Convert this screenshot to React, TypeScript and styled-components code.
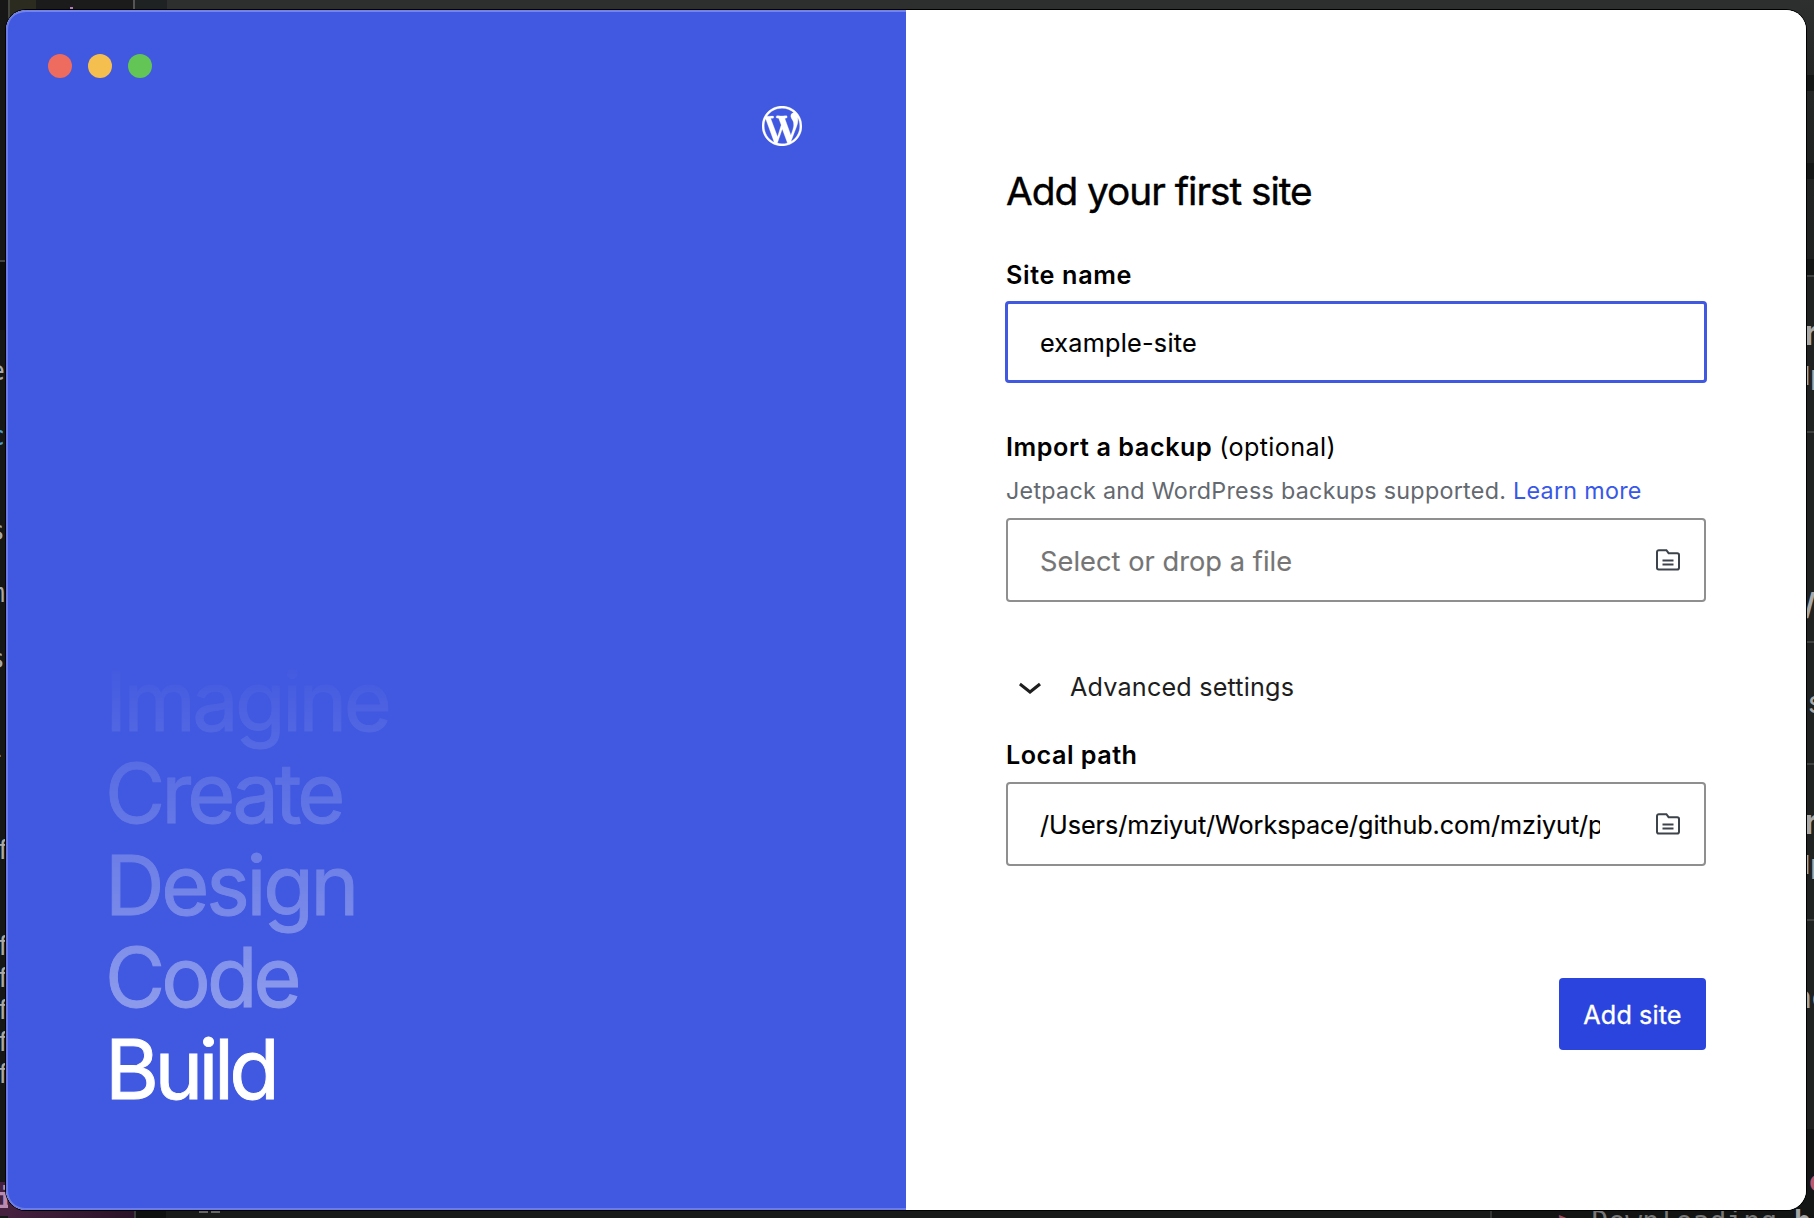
import React from "react";
import styled, { createGlobalStyle } from "styled-components";

const Global = createGlobalStyle`
  * { box-sizing: border-box; }
  html, body { margin: 0; padding: 0; background: #161717; }
  body { font-family: Inter, "Liberation Sans", sans-serif; overflow: hidden; }
`;

const blue = "#4158e0";

const Desktop = styled.div`
  position: relative;
  width: 1814px;
  height: 1218px;
  padding: 10px 8px 8px 6px;
  overflow: hidden;
`;

/* Terminal and editor windows that peek out around the app */
const BackdropGrid = styled.div`
  position: absolute;
  inset: 0;
  display: grid;
  grid-template-columns: 8px 1fr 14px;
  background: #161717;
`;

const Column = styled.div`
  display: flex;
  flex-direction: column;
  min-width: 0;
`;

const Middle = styled(Column)`
  justify-content: space-between;
`;

const Strip = styled.div<{ $h: number }>`
  display: flex;
  height: ${(p) => p.$h}px;
`;

const Piece = styled.div<{ $w?: number; $bg: string }>`
  display: flex;
  flex: ${(p) => (p.$w ? `0 0 ${p.$w}px` : "1 1 0")};
  min-width: 0;
  background: ${(p) => p.$bg};
`;

const Cell = styled.div<{ $h: number; $bg?: string; $end?: boolean }>`
  display: flex;
  flex: 0 0 ${(p) => p.$h}px;
  align-items: center;
  justify-content: ${(p) => (p.$end ? "flex-end" : "flex-start")};
  background: ${(p) => p.$bg ?? "transparent"};
`;

const Glyph = styled.span<{ $size?: number; $color?: string; $mono?: boolean; $bold?: boolean; $shift?: number }>`
  flex: none;
  margin-left: ${(p) => p.$shift ?? 0}px;
  margin-right: ${(p) => -(p.$shift ?? 0)}px;
  font-family: ${(p) => (p.$mono ? '"DejaVu Sans Mono", monospace' : 'Inter, "Liberation Sans", sans-serif')};
  font-size: ${(p) => p.$size ?? 26}px;
  font-weight: ${(p) => (p.$bold ? 700 : 400)};
  line-height: 32px;
  white-space: pre;
  color: ${(p) => p.$color ?? "#a9a9a9"};
`;

const LogLine = styled.div`
  z-index: 1;
  display: flex;
  flex: none;
  gap: 17px;
  height: 32px;
  margin: 22px 0 0 32px;
`;

const WindowShadow = styled.div`
  position: relative;
  z-index: 2;
  border-radius: 20px;
  box-shadow: 0 0 0 1px #000;
`;

const Window = styled.main`
  display: grid;
  grid-template-columns: 1fr 1fr;
  height: 1200px;
  border-radius: 20px;
  overflow: hidden;
  background: #fff;
`;

const Hero = styled.section`
  display: flex;
  flex-direction: column;
  justify-content: space-between;
  padding: 44px 99px 95px;
  background: ${blue};
  border-radius: 20px 0 0 20px;
  box-shadow: inset 2px 0 0 #6b7ce8, inset 0 2px 0 #7484ea, inset 0 -2px 0 #6b7ce8;
`;

const HeroTop = styled.div`
  display: flex;
  flex-direction: column;
`;

const Lights = styled.div`
  display: flex;
  gap: 16px;
  margin-left: -57px;
`;

const Light = styled.i<{ $color: string }>`
  width: 24px;
  height: 24px;
  border-radius: 50%;
  background: ${(p) => p.$color};
`;

const Logo = styled.svg`
  align-self: flex-end;
  width: 40px;
  height: 40px;
  margin: 28px 5px 0 0;
  fill: #fff;
  stroke: #fff;
  stroke-width: 0.15;
`;

const Words = styled.div`
  display: flex;
  flex-direction: column;
  color: #fff;
`;

const Fading = styled.div`
  display: flex;
  flex-direction: column;
  -webkit-mask-image: linear-gradient(to bottom, transparent 0, rgba(0, 0, 0, 0.42) 100%);
  mask-image: linear-gradient(to bottom, transparent 0, rgba(0, 0, 0, 0.42) 100%);
`;

const Word = styled.span<{ $spacing: number }>`
  font-size: 82.5px;
  line-height: 92px;
  letter-spacing: ${(p) => p.$spacing}px;
  -webkit-text-stroke: 0.9px currentColor;
`;

const Panel = styled.form`
  display: flex;
  flex-direction: column;
  padding: 157px 100px 0;
  color: #000;
  background: #fff;
`;

const Title = styled.h1`
  margin: 0 0 44px;
  font-size: 38.8px;
  font-weight: 400;
  line-height: 48px;
  letter-spacing: -1.03px;
  white-space: nowrap;
  -webkit-text-stroke: 0.4px currentColor;
`;

const Label = styled.div<{ $above?: number; $gap: number; $spacing: number }>`
  display: flex;
  gap: 7px;
  margin: ${(p) => p.$above ?? 0}px 0 ${(p) => p.$gap}px;
  font-size: 25.2px;
  line-height: 32px;
  font-weight: 600;
  letter-spacing: ${(p) => p.$spacing}px;
  white-space: nowrap;
`;

const Optional = styled.span`
  font-weight: 400;
  letter-spacing: 0.34px;
`;

const Hint = styled.p`
  margin: 0 0 11px;
  font-size: 23.3px;
  line-height: 32px;
  letter-spacing: 0.28px;
  color: #646970;
  white-space: nowrap;
`;

const HintLink = styled.a`
  color: #3858e9;
`;

const Field = styled.div<{ $focused?: boolean }>`
  display: flex;
  align-items: center;
  justify-content: space-between;
  height: ${(p) => (p.$focused ? 82 : 84)}px;
  margin: 0 ${(p) => (p.$focused ? -1 : 0)}px;
  padding: 0 ${(p) => (p.$focused ? 32 : 24)}px 0 32px;
  border: ${(p) => (p.$focused ? `3px solid ${blue}` : "2px solid #8f8f8f")};
  border-radius: 4px;
`;

const Value = styled.span<{ $placeholder?: boolean; $spacing?: number; $drop?: number }>`
  width: 560px;
  overflow: hidden;
  padding-top: ${(p) => p.$drop ?? 0}px;
  font-size: ${(p) => (p.$placeholder ? 27.2 : 25.2)}px;
  line-height: 36px;
  letter-spacing: ${(p) => p.$spacing ?? 0}px;
  color: ${(p) => (p.$placeholder ? "#757575" : "#000")};
  white-space: nowrap;
  -webkit-text-stroke: 0.15px currentColor;
`;

const FolderSvg = styled.svg`
  width: 24px;
  height: 22px;
  fill: none;
  stroke: #3c434a;
  stroke-width: 2;
`;

const Advanced = styled.div`
  display: flex;
  align-items: center;
  gap: 16px;
  height: 48px;
  margin: 60px 0 29px;
  font-size: 25.2px;
  letter-spacing: 0.18px;
  line-height: 32px;
  color: #1e1e1e;
`;

const AdvancedText = styled.span`
  padding-top: 2px;
`;

const Chevron = styled.svg`
  width: 48px;
  height: 48px;
  fill: #1e1e1e;
`;

const Submit = styled.button`
  align-self: flex-end;
  width: 147px;
  height: 72px;
  margin-top: 112px;
  padding: 2px 0 0;
  border: 0;
  border-radius: 4px;
  background: #2b44de;
  color: #fff;
  font-family: inherit;
  font-size: 25.2px;
  letter-spacing: 0.11px;
  -webkit-text-stroke: 0.3px currentColor;
`;

const Folder = () => (
  <FolderSvg viewBox="0 0 24 22">
    <path d="M1 18.7V3A1.8 1.8 0 0 1 2.8 1.2h7.6l2.2 3H21.2A1.8 1.8 0 0 1 23 6v12.7a1.8 1.8 0 0 1-1.8 1.8H2.8A1.8 1.8 0 0 1 1 18.7z" />
    <path d="M6.5 11.5h11M6.5 15.5h11" />
  </FolderSvg>
);

type Sliver = {
  h: number;
  bg?: string;
  text?: string;
  size?: number;
  color?: string;
  mono?: boolean;
  bold?: boolean;
  shift?: number;
};

const term = { h: 32, mono: true, shift: -3 };
const stem = { h: 32, mono: true, shift: 3, text: "f" };

const leftSlivers: Sliver[] = [
  { h: 260, bg: "#171717" },
  { h: 2, bg: "#444" },
  { h: 68, bg: "#0e0e0e" },
  { h: 25 },
  { ...term, text: "e" },
  { h: 33 },
  { ...term, text: "c", color: "#4f9dc6" },
  { h: 63 },
  { ...term, text: "s" },
  { h: 30 },
  { ...term, text: "m" },
  { h: 34 },
  { ...term, text: "s" },
  { h: 63 },
  { ...term, text: "-" },
  { h: 64 },
  { ...stem },
  { h: 64 },
  { ...stem },
  { ...stem },
  { ...stem },
  { ...stem },
  { ...stem },
  { h: 92 },
  { h: 34, bg: "#45203f", text: "it", mono: true, bold: true, size: 28, shift: 22, color: "#b98bb0" },
];

const body = "#202222";
const rule = "#3f4141";

const rightSlivers: Sliver[] = [
  { h: 75, bg: "linear-gradient(#2e3030, #232525)" },
  { h: 16, bg: "#151717" },
  { h: 72, bg: "linear-gradient(#252727, #1f2121)" },
  { h: 16, bg: "#151717" },
  { h: 80, bg: "linear-gradient(#222424, #1f2121)" },
  { h: 16, bg: "#131515" },
  { h: 2, bg: rule },
  { h: 40, bg: body },
  { h: 32, bg: body, text: "r", size: 34, bold: true, shift: 4 },
  { h: 11, bg: body },
  { h: 32, bg: body, text: "lp", size: 26, shift: 4 },
  { h: 39, bg: body },
  { h: 2, bg: rule },
  { h: 155, bg: body },
  { h: 32, bg: body, text: "/", size: 30, bold: true, shift: 4 },
  { h: 21, bg: body },
  { h: 2, bg: rule },
  { h: 43, bg: body },
  { h: 32, bg: body, text: "s", size: 30, shift: 8 },
  { h: 45, bg: body },
  { h: 2, bg: rule },
  { h: 41, bg: body },
  { h: 32, bg: body, text: "r", size: 34, bold: true, shift: 4 },
  { h: 11, bg: body },
  { h: 32, bg: body, text: "lp", size: 26, shift: 4 },
  { h: 38, bg: body },
  { h: 2, bg: rule },
  { h: 60, bg: body },
  { h: 32, bg: body, text: "ne", size: 30, shift: -6 },
  { h: 116, bg: body },
  { h: 37, bg: "#141616" },
  { h: 32, bg: "#141616", text: "c", size: 28, mono: true, bold: true, shift: 8, color: "#c0566c" },
  { h: 20, bg: "#141616" },
];

const Slivers = ({ items, end }: { items: Sliver[]; end?: boolean }) => (
  <Column>
    {items.map((s, i) => (
      <Cell key={i} $h={s.h} $bg={s.bg} $end={end}>
        {s.text && (
          <Glyph $size={s.size} $color={s.color} $mono={s.mono} $bold={s.bold} $shift={s.shift}>
            {s.text}
          </Glyph>
        )}
      </Cell>
    ))}
  </Column>
);

const topPieces: [number | undefined, string][] = [
  [2, "#45463f"],
  [26, "#2c2b20"],
  [34, "#1b1b1b"],
  [3, "linear-gradient(#1b1b1b 7px, #b57bb8 7px, #b57bb8 9px, #1b1b1b 9px)"],
  [60, "#1b1b1b"],
  [2, "#555"],
  [32, "#1e2222"],
  [undefined, "#2d2f2f"],
];

const bottomPieces: [number, string][] = [
  [126, "linear-gradient(90deg, #45203f, #2a1228)"],
  [2, "#3a3c3c"],
  [30, "#0e1010"],
  [33, "#181a1a"],
  [9, "linear-gradient(#181a1a 27px, #666 27px, #666 29px, #181a1a 29px)"],
  [3, "#181a1a"],
  [9, "linear-gradient(#181a1a 27px, #666 27px, #666 29px, #181a1a 29px)"],
  [1270, "#181a1a"],
  [2, "#333535"],
];

const Backdrop = () => (
  <BackdropGrid>
    <Slivers items={leftSlivers} end />
    <Middle>
      <Strip $h={34}>
        {topPieces.map(([w, bg], i) => (
          <Piece key={i} $w={w} $bg={bg} />
        ))}
      </Strip>
      <Strip $h={34}>
        {bottomPieces.map(([w, bg], i) => (
          <Piece key={i} $w={w} $bg={bg} />
        ))}
        <Piece $bg="#121414">
          <LogLine>
            <Glyph $mono $size={28} $color="#9c4a5c">{"==>"}</Glyph>
            <Glyph $mono $size={28} $color="#777">Downloading</Glyph>
            <Glyph $mono $size={28} $color="#a5a5a5" $bold>br</Glyph>
          </LogLine>
        </Piece>
      </Strip>
    </Middle>
    <Slivers items={rightSlivers} />
  </BackdropGrid>
);

export default function App() {
  return (
    <Desktop>
      <Global />
      <Backdrop />
      <WindowShadow>
        <Window>
          <Hero>
            <HeroTop>
              <Lights>
                <Light $color="#ed6b5f" />
                <Light $color="#f5bf4f" />
                <Light $color="#62c555" />
              </Lights>
              <Logo viewBox="0 0 20 20">
                <path d="M20 10c0-5.51-4.49-10-10-10C4.48 0 0 4.49 0 10c0 5.52 4.48 10 10 10 5.51 0 10-4.48 10-10zM7.78 15.37L4.37 6.22c.55-.02 1.17-.08 1.17-.08.5-.06.44-1.13-.06-1.11 0 0-1.45.11-2.37.11-.18 0-.37 0-.58-.01C4.12 2.69 6.87 1.11 10 1.11c2.33 0 4.45.87 6.05 2.34-.68-.11-1.65.39-1.65 1.58 0 .74.45 1.36.9 2.1.35.61.55 1.36.55 2.46 0 1.49-1.4 5-1.4 5l-3.03-8.37c.54-.02.82-.17.82-.17.5-.05.44-1.25-.06-1.22 0 0-1.44.12-2.38.12-.87 0-2.33-.12-2.33-.12-.5-.03-.56 1.2-.06 1.22l.92.08 1.26 3.41zM17.41 10c.24-.64.74-1.87.43-4.25.7 1.29 1.05 2.71 1.05 4.25 0 3.29-1.73 6.24-4.4 7.78.97-2.59 1.94-5.2 2.92-7.78zM6.1 18.09C3.12 16.65 1.11 13.53 1.11 10c0-1.3.23-2.48.72-3.59C3.25 10.3 4.67 14.2 6.1 18.09zm4.03-6.63l2.58 6.98c-.86.29-1.76.45-2.71.45-.79 0-1.57-.11-2.29-.33.81-2.38 1.62-4.74 2.42-7.1z" />
              </Logo>
            </HeroTop>
            <Words>
              <Fading>
                <Word $spacing={-3.55}>Imagine</Word>
                <Word $spacing={-3.8}>Create</Word>
                <Word $spacing={-3.25}>Design</Word>
                <Word $spacing={-3.9}>Code</Word>
              </Fading>
              <Word $spacing={-4.6}>Build</Word>
            </Words>
          </Hero>
          <Panel>
            <Title>Add your first site</Title>
            <Label $gap={10} $spacing={0.65}>Site name</Label>
            <Field $focused>
              <Value $spacing={0.25} $drop={1}>example-site</Value>
            </Field>
            <Label $above={48} $gap={12} $spacing={0.57}>
              <span>Import a backup</span>
              <Optional>(optional)</Optional>
            </Label>
            <Hint>
              Jetpack and WordPress backups supported. <HintLink>Learn more</HintLink>
            </Hint>
            <Field>
              <Value $placeholder $spacing={0.05} $drop={3}>Select or drop a file</Value>
              <Folder />
            </Field>
            <Advanced>
              <Chevron viewBox="0 0 24 24">
                <path d="M17.5 11.6L12 16l-5.5-4.4.9-1.2L12 14l4.5-3.6 1 1.2z" />
              </Chevron>
              <AdvancedText>Advanced settings</AdvancedText>
            </Advanced>
            <Label $gap={11} $spacing={0.48}>Local path</Label>
            <Field>
              <Value $spacing={-0.07} $drop={2}>/Users/mziyut/Workspace/github.com/mziyut/p</Value>
              <Folder />
            </Field>
            <Submit type="button">Add site</Submit>
          </Panel>
        </Window>
      </WindowShadow>
    </Desktop>
  );
}
